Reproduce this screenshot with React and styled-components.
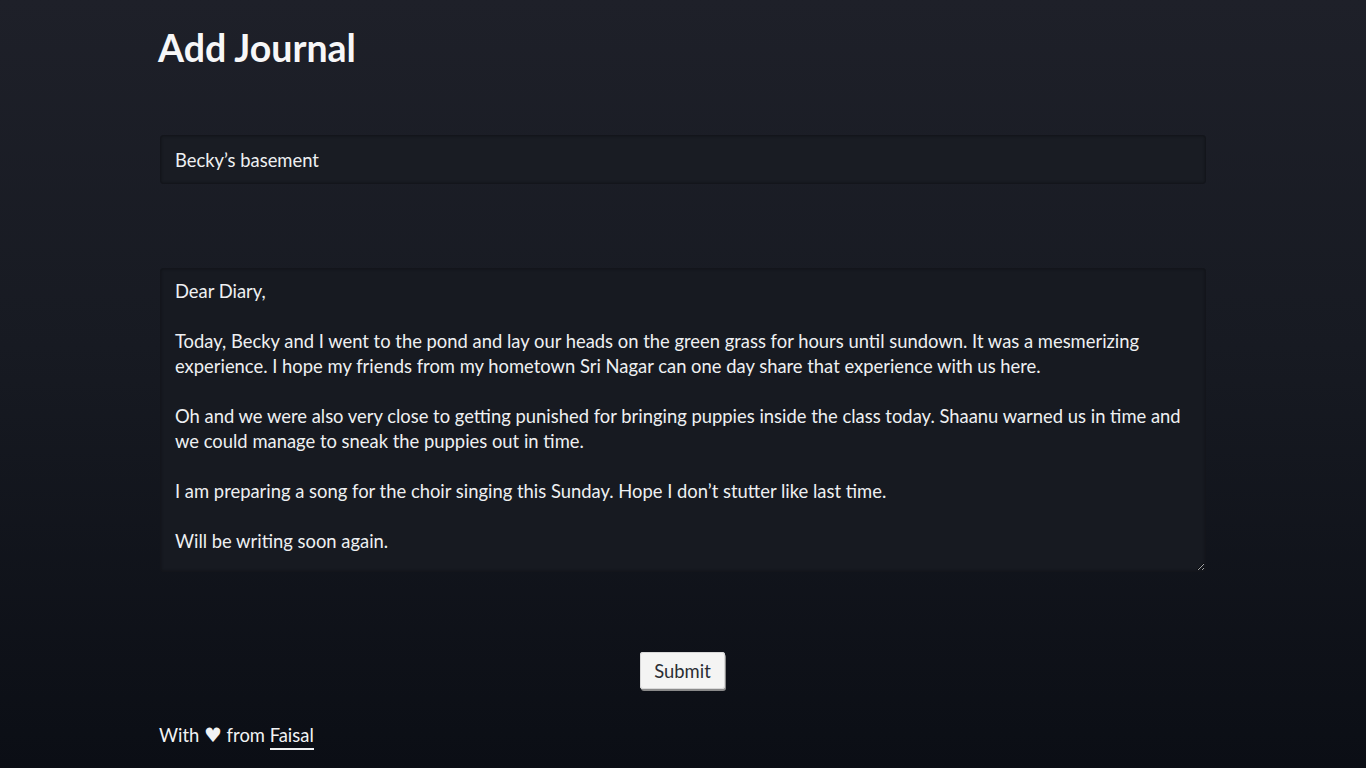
import React from "react";
import styled, { createGlobalStyle } from "styled-components";

const Global = createGlobalStyle`
  html, body { margin: 0; padding: 0; }
  body {
    min-height: 768px;
    background: linear-gradient(180deg, #1e2029 0%, #171a22 45%, #0b0e15 100%);
    font-family: "Lato", "Noto Sans", sans-serif;
    color: #eef0f2;
  }
`;

const Page = styled.main`
  width: 1048px;
  margin: 0 auto;
  padding-top: 25px;
  min-height: 768px;
  box-sizing: border-box;
`;

const Title = styled.h1`
  margin: 0 0 0 -1px;
  font-size: 37.5px;
  line-height: 46px;
  font-weight: 700;
  color: #f7f7f8;
`;

const Form = styled.form`
  display: flex;
  flex-direction: column;
  margin-top: 64px;
`;

const fieldBase = `
  box-sizing: border-box;
  width: 1046px;
  margin-left: 1px;
  background: #171a21;
  border: 1px solid #13151b;
  border-radius: 3px;
  box-shadow: inset 0 0 3px rgba(0,0,0,0.35);
  color: #eef0f2;
  font-family: "Lato", "Noto Sans", sans-serif;
  font-size: 18.4px;
  padding: 0 14px;
  outline: none;
`;

const TitleInput = styled.input`
  ${fieldBase}
  height: 49px;
  background: #191c23;
`;

const Body = styled.textarea`
  ${fieldBase}
  margin-top: 84px;
  height: 304px;
  line-height: 25px;
  padding-top: 10px;
  padding-bottom: 9px;
  resize: vertical;
`;

const Actions = styled.div`
  display: flex;
  justify-content: center;
  margin-top: 80px;
`;

const Button = styled.button`
  font-family: "Lato", "Noto Sans", sans-serif;
  font-size: 18.4px;
  color: #2a2d33;
  background: #f4f4f3;
  border: none;
  border-radius: 3px;
  box-shadow: 1px 2px 0 #8a8a8a, inset 0 0 0 1px #d8d8d8;
  height: 37px;
  padding: 0 14px;
  margin-left: -1px;
  cursor: pointer;
`;

const Footer = styled.footer`
  margin-top: 34px;
  font-size: 18.4px;
  color: #f2f3f4;
`;

const Heart = styled.span`
  font-family: "DejaVu Sans", sans-serif;
  font-size: 20px;
`;

const Author = styled.a`
  color: inherit;
  text-decoration: none;
  border-bottom: 2px solid #f2f3f4;
  padding-bottom: 2px;
`;

const text = `Dear Diary,

Today, Becky and I went to the pond and lay our heads on the green grass for hours until sundown. It was a mesmerizing experience. I hope my friends from my hometown Sri Nagar can one day share that experience with us here.

Oh and we were also very close to getting punished for bringing puppies inside the class today. Shaanu warned us in time and we could manage to sneak the puppies out in time.

I am preparing a song for the choir singing this Sunday. Hope I don’t stutter like last time.

Will be writing soon again.`;

export default function App() {
  return (
    <>
      <Global />
      <Page>
        <Title>Add Journal</Title>
        <Form onSubmit={(e) => e.preventDefault()}>
          <TitleInput defaultValue="Becky’s basement" />
          <Body defaultValue={text} />
          <Actions>
            <Button type="submit">Submit</Button>
          </Actions>
        </Form>
        <Footer>
          With <Heart>♥</Heart> from <Author href="#">Faisal</Author>
        </Footer>
      </Page>
    </>
  );
}
